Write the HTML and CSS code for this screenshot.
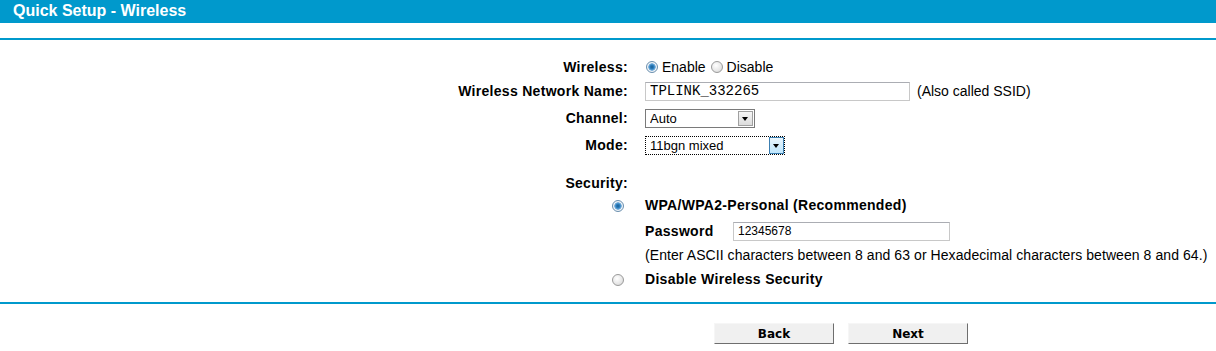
FILE: index.html
```html
<!DOCTYPE html>
<html lang="en">
<head>
    <meta charset="UTF-8">
    <title>Quick Setup - Wireless</title>
    <link rel="stylesheet" href="styles.css">
</head>
<body>
    <div class="title-bar">Quick Setup - Wireless</div>
    <div class="rule"></div>

    <form class="setup-form">
        <div class="row">
            <div class="label">Wireless:</div>
            <div class="field">
                <input type="radio" name="wireless" id="wlEnable" checked>
                <label for="wlEnable">Enable</label>
                <input type="radio" name="wireless" id="wlDisable" class="second">
                <label for="wlDisable">Disable</label>
            </div>
        </div>

        <div class="row">
            <div class="label">Wireless Network Name:</div>
            <div class="field">
                <input type="text" class="ssid-input" value="TPLINK_332265">
                <span class="note">(Also called SSID)</span>
            </div>
        </div>

        <div class="row row-gap">
            <div class="label">Channel:</div>
            <div class="field">
                <div class="select-box channel">
                    <select>
                        <option>Auto</option>
                    </select>
                    <span class="select-arrow"></span>
                </div>
            </div>
        </div>

        <div class="row row-gap">
            <div class="label">Mode:</div>
            <div class="field">
                <div class="select-box mode focused">
                    <select>
                        <option>11bgn mixed</option>
                    </select>
                    <span class="select-arrow"></span>
                </div>
            </div>
        </div>

        <div class="row small security-title">
            <div class="label">Security:</div>
            <div class="field"></div>
        </div>

        <div class="row small">
            <div class="label"><input type="radio" name="security" id="secWpa" checked></div>
            <div class="field"><label for="secWpa" class="bold">WPA/WPA2-Personal (Recommended)</label></div>
        </div>

        <div class="row small pwd-row">
            <div class="label"></div>
            <div class="field">
                <span class="bold pwd-label">Password</span>
                <input type="text" class="pwd-input" value="12345678">
            </div>
        </div>

        <div class="row small hint-row">
            <div class="label"></div>
            <div class="field hint">(Enter ASCII characters between 8 and 63 or Hexadecimal characters between 8 and 64.)</div>
        </div>

        <div class="row small off-row">
            <div class="label"><input type="radio" name="security" id="secNone"></div>
            <div class="field"><label for="secNone" class="bold">Disable Wireless Security</label></div>
        </div>
    </form>

    <div class="rule bottom-rule"></div>

    <div class="buttons">
        <button type="button" class="btn">Back</button>
        <button type="button" class="btn">Next</button>
    </div>
</body>
</html>
```

FILE: styles.css
```css
body {
    margin: 0;
    padding: 0;
    background: #fff;
    color: #000;
    font-family: "Liberation Sans", Arial, sans-serif;
    font-size: 14px;
}

.title-bar {
    height: 23px;
    line-height: 22px;
    background-color: #0099cc;
    color: #fff;
    font-weight: bold;
    font-size: 16px;
    padding-left: 13px;
}

.rule {
    height: 2px;
    background-color: #0099cc;
    margin-top: 15px;
}

.setup-form {
    margin: 15px 0 0 0;
}

.row {
    display: flex;
    align-items: center;
    height: 24px;
}

.row-gap {
    margin-top: 3px;
}

.row.small {
    height: 22px;
}

.security-title {
    margin-top: 15px;
}

.pwd-row {
    margin-top: 4px;
}

.hint-row {
    margin-top: 2px;
}

.off-row {
    margin-top: 2px;
}

.label {
    width: 628px;
    text-align: right;
    font-weight: bold;
    letter-spacing: 0.3px;
    flex-shrink: 0;
}

.field {
    display: flex;
    align-items: center;
    padding-left: 17px;
    white-space: nowrap;
}

.hint {
    letter-spacing: 0.07px;
}

.bold {
    font-weight: bold;
    letter-spacing: 0.3px;
}

/* radios */
input[type="radio"] {
    -webkit-appearance: none;
    appearance: none;
    width: 12px;
    height: 12px;
    margin: 0 4px 0 1px;
    border: 1px solid #9a9a9a;
    border-radius: 50%;
    background: radial-gradient(circle at 40% 35%, #fff 0%, #e6e6e6 60%, #cfcfcf 100%);
    box-sizing: border-box;
    vertical-align: middle;
}

input[type="radio"].second {
    margin-left: 5px;
}

input[type="radio"]:checked {
    border-color: #6a8fae;
    background: radial-gradient(circle at 50% 50%, #1c5d8f 0, #2b7fc0 2px, #7fb3dd 3.5px, #f2f6fa 4px, #dfe6ec 100%);
}

.label input[type="radio"] {
    margin: 0 4px 0 0;
}

/* text inputs */
input[type="text"] {
    height: 19px;
    box-sizing: border-box;
    border: 1px solid #c8c8c8;
    border-top-color: #abadb3;
    padding: 0 4px;
    margin: 0;
    background: #fff;
    color: #000;
    outline: none;
}

.ssid-input {
    width: 265px;
    font-family: "Liberation Mono", "Courier New", monospace;
    font-size: 14px;
}

.note {
    margin-left: 7px;
}

.pwd-label {
    width: 88px;
}

.pwd-input {
    width: 217px;
    font-family: "Liberation Sans", Arial, sans-serif;
    font-size: 12px;
}

/* selects */
.select-box {
    position: relative;
    height: 19px;
    box-sizing: border-box;
    border: 1px solid #7a7a7a;
    background: #fff;
}

.select-box.channel {
    width: 110px;
}

.select-box.mode {
    width: 140px;
}

.select-box.focused {
    border: 1px dotted #000;
}

.select-box select {
    -webkit-appearance: none;
    appearance: none;
    width: 100%;
    height: 17px;
    line-height: 17px;
    border: none;
    margin: 0;
    padding: 0 0 0 4px;
    background: transparent;
    font-family: "Liberation Sans", Arial, sans-serif;
    font-size: 13px;
    color: #000;
    outline: none;
}

.select-arrow {
    position: absolute;
    top: 1px;
    right: 1px;
    width: 15px;
    height: 15px;
    box-sizing: border-box;
    border: 1px solid #a0a0a0;
    background: linear-gradient(#f6f6f6, #dcdcdc);
    pointer-events: none;
}

.select-arrow::after {
    content: "";
    position: absolute;
    left: 3px;
    top: 5px;
    border-left: 3.5px solid transparent;
    border-right: 3.5px solid transparent;
    border-top: 4px solid #000;
}

.focused .select-arrow {
    top: 0;
    right: 0;
    height: 17px;
    border-color: #3c7fb1;
    background: linear-gradient(#eaf6fd, #bee6fd);
}

.focused .select-arrow::after {
    top: 6px;
}

/* buttons */
.bottom-rule {
    margin-top: 12px;
}

.buttons {
    display: flex;
    gap: 14px;
    padding-left: 714px;
    margin-top: 19px;
}

.btn {
    width: 120px;
    height: 21px;
    margin: 0;
    padding: 0;
    box-sizing: border-box;
    background: #f0f0f0;
    border: 1px solid #f6f6f6;
    border-right-color: #6e6e6e;
    border-bottom-color: #6e6e6e;
    font-family: "DejaVu Sans", Tahoma, sans-serif;
    font-weight: bold;
    font-size: 12px;
    color: #000;
    cursor: pointer;
}
```
